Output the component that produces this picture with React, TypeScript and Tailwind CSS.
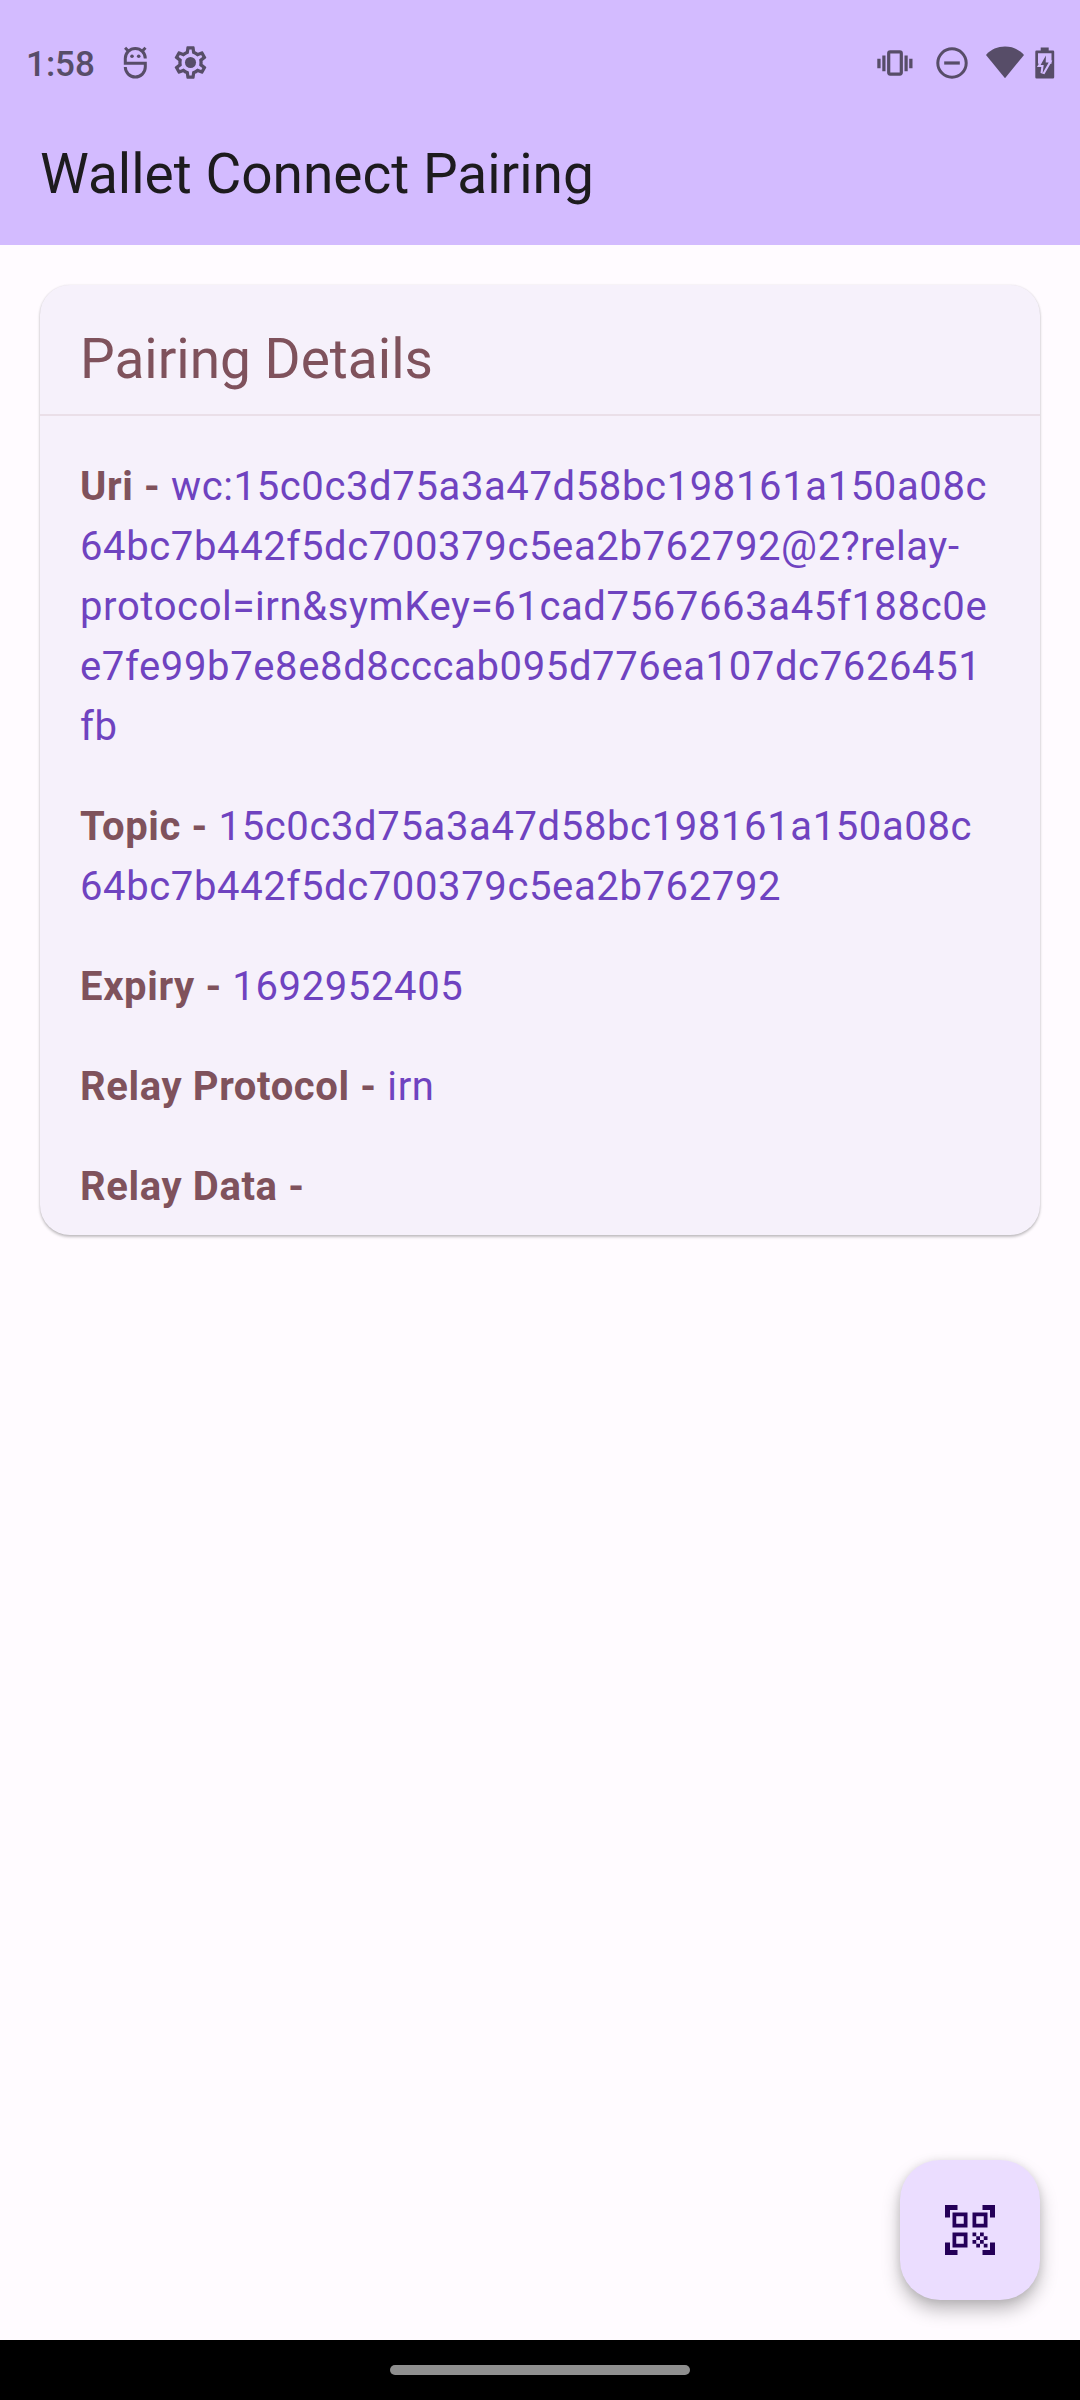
import React from "react";

const details: { label: string; value: string }[] = [
  {
    label: "Uri",
    value:
      "wc:15c0c3d75a3a47d58bc198161a150a08c\n64bc7b442f5dc700379c5ea2b762792@2?relay-\nprotocol=irn&symKey=61cad7567663a45f188c0e\ne7fe99b7e8e8d8cccab095d776ea107dc7626451\nfb",
  },
  { label: "Topic", value: "15c0c3d75a3a47d58bc198161a150a08c\n64bc7b442f5dc700379c5ea2b762792" },
  { label: "Expiry", value: "1692952405" },
  { label: "Relay Protocol", value: "irn" },
  { label: "Relay Data", value: "" },
];

function DebugIcon() {
  return (
    <svg className="ml-[28px] h-[34px] w-[24px]" viewBox="0 0 24 34" fill="none" stroke="currentColor" strokeWidth="3">
      <path d="M22.300 12.400A10 10 0 0 0 2.300 12.400V17.200H22.300V21A10 10 0 0 1 2.300 21" />
      <path d="M2.100 1.800 5.500 5.200M22.500 1.800 19.100 5.200" strokeWidth="3" />
      <circle cx="9" cy="10.300" r="1.800" fill="currentColor" stroke="none" />
      <circle cx="15.700" cy="10.300" r="1.800" fill="currentColor" stroke="none" />
    </svg>
  );
}

function GearIcon() {
  return (
    <svg className="ml-[24px] h-[39px] w-[39px]" viewBox="0 0 24 24" fill="currentColor">
      <path d="M19.43 12.98c.04-.32.07-.64.07-.98 0-.34-.03-.66-.07-.98l2.110-1.650c.19-.15.24-.42.12-.64l-2-3.460c-.09-.16-.26-.25-.44-.25-.06 0-.12.01-.17.03l-2.490 1c-.52-.4-1.080-.73-1.690-.98l-.38-2.650C14.460 2.180 14.250 2 14 2h-4c-.25 0-.46.18-.49.42l-.38 2.650c-.61.25-1.170.59-1.690.98l-2.490-1c-.06-.02-.12-.03-.18-.03-.17 0-.34.09-.43.25l-2 3.460c-.13.22-.07.49.12.64l2.110 1.650c-.04.32-.07.65-.07.98 0 .33.03.66.07.98l-2.110 1.650c-.19.15-.24.42-.12.64l2 3.460c.09.16.26.25.44.25.06 0 .12-.01.17-.03l2.490-1c.52.4 1.080.73 1.690.98l.38 2.650c.03.24.24.42.49.42h4c.25 0 .46-.18.49-.42l.38-2.650c.61-.25 1.170-.59 1.690-.98l2.490 1c.06.02.12.03.18.03.17 0 .34-.09.43-.25l2-3.460c.12-.22.07-.49-.12-.64l-2.110-1.650zm-1.980-1.710c.04.31.05.52.05.73 0 .21-.02.43-.05.73l-.14 1.130.89.7 1.080.84-.7 1.210-1.270-.51-1.040-.42-.9.68c-.43.32-.84.56-1.250.73l-1.060.43-.16 1.130-.2 1.350h-1.400l-.19-1.350-.16-1.130-1.060-.43c-.43-.18-.83-.41-1.230-.71l-.91-.7-1.060.43-1.270.51-.7-1.210 1.080-.84.89-.7-.14-1.130c-.03-.31-.05-.54-.05-.74s.02-.43.05-.73l.14-1.130-.89-.7-1.080-.84.7-1.210 1.270.51 1.040.42.9-.68c.43-.32.84-.56 1.250-.73l1.060-.43.16-1.130.2-1.350h1.390l.19 1.350.16 1.130 1.060.43c.43.18.83.41 1.230.71l.91.7 1.060-.43 1.270-.51.7 1.210-1.070.85-.89.7.14 1.130z" />
      <circle cx="12" cy="12" r="3.400" />
    </svg>
  );
}

function VibrateIcon() {
  return (
    <svg className="h-[40px] w-[40px]" viewBox="0 0 40 40" fill="currentColor">
      <path d="M2.300 15.700h3.300v9.500H2.300zM7.300 12.500h3.200v15.700H7.300zM29.500 12.500h3.200v15.700h-3.200zM34.200 15.700h3.300v9.500h-3.300z" />
      <rect x="13.700" y="8.900" width="12.600" height="22.200" rx="1.500" fill="none" stroke="currentColor" strokeWidth="3.200" />
    </svg>
  );
}

function DoNotDisturbIcon() {
  return (
    <svg className="ml-[21px] h-[32px] w-[32px]" viewBox="0 0 32 32" fill="none" stroke="currentColor" strokeWidth="3">
      <circle cx="16" cy="16" r="14.200" />
      <path d="M8.200 16h15.600" strokeWidth="3.200" />
    </svg>
  );
}

function WifiIcon() {
  return (
    <svg className="ml-[17px] h-[34px] w-[40px]" viewBox="0 0 40 34" fill="currentColor">
      <path d="M20 32.200 1 8.900C6 3.300 12.700.6 20 .6s14 2.700 19 8.300z" />
    </svg>
  );
}

function BatteryIcon() {
  return (
    <svg className="ml-[10px] h-[34px] w-[20px]" viewBox="0 0 20 34">
      <path
        fill="currentColor"
        fillRule="evenodd"
        d="M5.700 1.500h8v3H18a1.200 1.200 0 0 1 1.200 1.200v25.600a1.200 1.200 0 0 1-1.200 1.200H1.500A1.200 1.200 0 0 1 .3 31.300V5.700a1.200 1.200 0 0 1 1.200-1.200h4.200zM3 7.300v10.500h13.500V7.300z"
      />
      <path
        fill="currentColor"
        stroke="#d3bbff"
        strokeWidth="4.200"
        paintOrder="stroke"
        d="M10.900 9.600 5.600 18.900h3.100L7.600 27.200 13.700 16.500h-3z"
      />
    </svg>
  );
}

function ScanIcon() {
  return (
    <svg className="h-[60px] w-[60px]" viewBox="0 0 24 24" fill="currentColor">
      <path d="M9.500 6.500v3h-3v-3h3M11 5H5v6h6V5zm-1.500 9.500v3h-3v-3h3M11 13H5v6h6v-6zm6.500-6.500v3h-3v-3h3M19 5h-6v6h6V5zm-6 8h1.500v1.500H13V13zm1.500 1.500H16V16h-1.500v-1.500zM16 13h1.500v1.500H16V13zm-3 3h1.500v1.500H13V16zm1.500 1.500H16V19h-1.500v-1.500zM16 16h1.500v1.500H16V16zm1.500-1.500H19V16h-1.500v-1.500zm0 3H19V19h-1.500v-1.500zM22 7h-2V4h-3V2h5v5zm0 15v-5h-2v3h-3v2h5zM2 22h5v-2H4v-3H2v5zM2 2v5h2V4h3V2H2z" />
    </svg>
  );
}

export default function App() {
  return (
    <div className="flex h-[2400px] w-[1080px] flex-col bg-[#fffbff] font-['Roboto',sans-serif]">
      <header className="h-[245px] bg-[#d3bbff]">
        <div className="flex h-[105px] items-center justify-between pt-5 pr-[25px] pl-[26px] text-[#574d68]">
          <div className="flex items-center">
            <span className="w-[69px] pt-[4px] text-[35px] leading-[42px] font-medium">1:58</span>
            <DebugIcon />
            <GearIcon />
          </div>
          <div className="flex items-center">
            <VibrateIcon />
            <DoNotDisturbIcon />
            <WifiIcon />
            <BatteryIcon />
          </div>
        </div>
        <div className="flex h-[138px] items-center px-10">
          <h1 className="text-[55px] leading-[70px] text-[#1d1b1e]">Wallet Connect Pairing</h1>
        </div>
      </header>

      <main className="flex flex-1 flex-col justify-between p-10">
        <section className="h-[950px] overflow-hidden rounded-[30px] bg-[#f6f1fb] shadow-[0_2px_3px_rgba(0,0,0,0.24),0_0_2px_rgba(0,0,0,0.1)]">
          <h2 className="h-[131px] border-b-2 border-[#eadfe8] px-10 pt-[39px] text-[55px] leading-[70px] text-[#7f525c]">
            Pairing Details
          </h2>
          <dl className="flex flex-col gap-10 px-10 pt-[40.5px] text-[40px] leading-[60px] tracking-[0.625px]">
            {details.map(({ label, value }) => (
              <div key={label} className="whitespace-pre">
                <dt className="inline font-bold text-[#7f525c]">{`${label} - `}</dt>
                <dd className="inline text-[#6f43c0]">{value}</dd>
              </div>
            ))}
          </dl>
        </section>

        <button
          aria-label="Scan QR code"
          className="flex size-[140px] items-center justify-center self-end rounded-[40px] bg-[#ebddff] text-[#250059] shadow-[0_10px_18px_rgba(0,0,0,0.26),0_1px_8px_rgba(0,0,0,0.1)]"
        >
          <ScanIcon />
        </button>
      </main>

      <nav className="flex h-[60px] items-center justify-center bg-black">
        <div className="h-[10px] w-[300px] rounded-full bg-[#8f8f8f]" />
      </nav>
    </div>
  );
}
